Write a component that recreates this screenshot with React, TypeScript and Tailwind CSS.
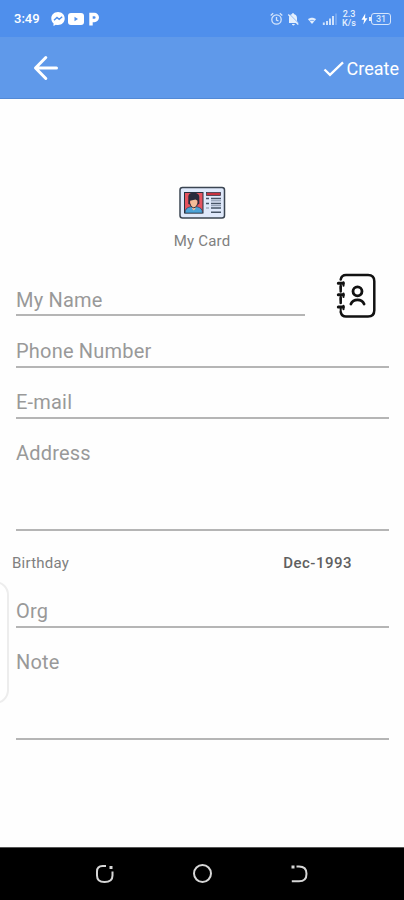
import React from "react";

type FieldProps = {
  label: string;
  className?: string;
};

const Field: React.FC<FieldProps> = ({ label, className = "" }) => (
  <div className={`border-b-2 border-[#b5b5b5] ${className}`}>
    <p className="text-[20px] leading-6 tracking-[0.2px] text-[#999] whitespace-nowrap">
      {label}
    </p>
  </div>
);

const StatusBar: React.FC = () => (
  <div className="h-[37px] shrink-0 bg-[#4f8fec] pl-[14px] pr-[13px] flex items-center justify-between text-white">
    <div className="flex items-center">
      <span className="text-[13px] leading-4 font-medium w-[37px]">3:49</span>
      <svg width="49" height="16" viewBox="0 0 49 16">
        {/* messenger */}
        <path fill="#fff" d="M7 1C3 1 0.3 3.900 0.300 7.400c0 2 .9 3.700 2.200 4.900V15l2.300-1.300c.7.200 1.400.3 2.200.3 4 0 6.700-2.900 6.700-6.500S11 1 7 1Z" />
        <path fill="none" stroke="#4f8fec" strokeWidth="1.400" d="M3 9.300l3-2.900 2.200 1.900 3-2.500" />
        {/* youtube */}
        <rect x="17" y="2" width="16" height="12" rx="3" fill="#fff" />
        <path fill="#4f8fec" d="M23.500 5.800v4.400l3.500-2.200z" />
        {/* p logo */}
        <path fill="none" stroke="#fff" strokeWidth="3.400" d="M40 14.500V3.500h3.300a3 3 0 0 1 0 6H40" />
      </svg>
    </div>
    <div className="flex items-center">
      <svg width="72" height="16" viewBox="0 0 72 16" fill="none" stroke="#d5e5fb" strokeWidth="1.300">
        {/* alarm */}
        <circle cx="6.500" cy="8.500" r="4.700" />
        <path d="M6.500 6v3l2 1M.7 4.500l2.500-2.200M12.300 4.500L9.800 2.300" />
        {/* muted bell */}
        <path fill="#e4effd" stroke="none" d="M19 12V7c0-2.100 1.200-3.600 3.300-4V2h1.400v1c1.900.4 3.300 1.900 3.300 4v3l1.500 2zM22 13h2.800c0 .8-.6 1.400-1.400 1.400S22 13.800 22 13z" />
        <path stroke="#4f8fec" strokeWidth=".7" d="M19.500 3.200l9.500 9.500" />
        <path stroke="#e4effd" d="M18.300 3.500l10 10" />
        {/* wifi */}
        <path fill="#e4effd" stroke="none" d="M38 8.200c2.200-2 5.800-2 8 0L42 13z" />
        <path stroke="#4f8fec" strokeWidth=".7" d="M39.500 10.200c1.400-1.200 3.600-1.200 5 0" />
        {/* signal */}
        <path strokeWidth="1.900" d="M53.800 14v-2.500M57 14v-4M60 14V7.500M63 14V5" />
        <path strokeWidth="1" opacity=".55" d="M66 14V2.500" />
      </svg>
      <p className="w-[16px] -translate-x-px text-center text-[9px] leading-[9px] font-medium text-[#e4effd]">
        2.3
        <br />
        K/s
      </p>
      <div className="ml-[3px] flex items-center">
        <svg width="8" height="12" viewBox="0 0 8 12">
          <path fill="#fff" d="M4.300.5L.5 6.700h2.600L2.300 11.500 6.500 5.200H4z" />
        </svg>
        <span className="h-[4px] w-[2px] bg-[#e4effd]"></span>
        <span className="flex h-[12px] w-[20px] items-center justify-center rounded-[3px] border-[1.500px] border-[#d5e5fb] text-[9px] leading-[10px] font-medium text-[#d5e5fb]">
          31
        </span>
      </div>
    </div>
  </div>
);

const IdCardIcon: React.FC = () => (
  <svg width="48" height="34" viewBox="0 0 48 34">
    <rect x="2" y="1.500" width="44.500" height="30.500" rx="2.500" fill="#dfe9fb" stroke="#3b4552" strokeWidth="1.500" />
    <rect x="6.500" y="6.500" width="18.500" height="20.500" fill="#e5535f" stroke="#27313f" strokeWidth="1" />
    <path fill="#4aa3d8" stroke="#27313f" strokeWidth=".6" d="M7 27c0-4 2-5.500 5.500-6.200H19c3.500.7 5.500 2.200 5.500 6.200z" />
    <path fill="#f4bd98" d="M12.300 13h7v4.800c0 1.700-1 2.700-1.900 3.200v1.700l-1.600 1.700-1.600-1.700V21c-1.100-.5-1.900-1.500-1.900-3.200z" />
    <path fill="#292b3c" d="M10.300 18v-7.500c0-2 1.500-3.300 3.500-3.500 3-.8 7.500.2 7.500 4v7l-1.700.6v-3.800l-2.100-1.300-5.500 1.300v3.800z" />
    <path fill="none" stroke="#27313f" strokeWidth="1" d="M12 17.500c.3 2.200 1.500 3.800 3.800 4.300 2.200-.5 3.500-2.100 3.800-4.300" />
    <rect x="28.500" y="6.500" width="14" height="3" fill="#c83340" stroke="#27313f" strokeWidth=".7" />
    <path stroke="#465466" strokeWidth="1.500" d="M28 12.500h3M33 12.500h10M28 17.500h3M33 17.500h10M33 22h10M33 26.300h10" />
    <path stroke="#8290a5" strokeWidth="1" d="M33 14.800h10M33 19.700h10M28 22h3" />
  </svg>
);

const ContactBookIcon: React.FC = () => (
  <svg width="42" height="46" viewBox="0 0 42 46" fill="none" stroke="#111" strokeWidth="2.500" strokeLinecap="round" strokeLinejoin="round">
    <path d="M4.700 6.500C5.300 3.500 7 2 10 2h22c4 0 6.300 2.300 6.300 6.300v29c0 4-2.300 6.300-6.300 6.300H10c-3 0-4.700-1.500-5.300-4.500M4.700 13.500v5M4.700 25v5" />
    <path strokeWidth="3" d="M2.300 10.300h5M2.300 21.700h5M2.300 34h5" />
    <path strokeWidth="2" d="M7.500 9.200v3.500M7.500 20.600v3.500M7.500 32.800v3.500M4.700 12v4M4.700 23v4M4.700 35v3" />
    <circle cx="21.500" cy="18.300" r="4.500" strokeWidth="2.800" />
    <path strokeWidth="2.800" d="M14.900 31c1.300-2.900 3.600-4.100 6.600-4.100s5.300 1.200 6.600 4.100" />
  </svg>
);

const NavBar: React.FC = () => (
  <div className="h-[53px] shrink-0 border-t border-[#555] bg-black px-[95px] flex items-center justify-between">
    <svg width="20" height="22" viewBox="0 0 20 22" fill="none" stroke="#d6d6d6" strokeWidth="2">
      <path d="M11 3H7.500C4 3 2 5 2 8.500v4C2 16.500 4.500 19 9.500 19s8-2.500 8-6.500V8.500" />
      <path strokeWidth="3" d="M14.500 4.500h3" />
    </svg>
    <svg width="22" height="22" viewBox="0 0 22 22" fill="none" stroke="#d6d6d6" strokeWidth="2">
      <circle cx="11.500" cy="10.500" r="8.500" />
    </svg>
    <svg width="20" height="22" viewBox="0 0 20 22" fill="none" stroke="#d6d6d6" strokeWidth="2">
      <path d="M7.500 3.500H10c5 0 7.500 2.500 7.500 7.200S15 18.300 10 18.300H2.800" />
      <path strokeWidth="3" d="M2.500 4h3" />
    </svg>
  </div>
);

const App: React.FC = () => {
  return (
    <div className="relative flex h-[900px] w-[404px] flex-col overflow-hidden bg-[#fefefe] font-['Roboto',sans-serif]">
      <StatusBar />

      {/* App bar */}
      <header className="h-[62px] shrink-0 border-b border-[#5289d6] bg-[#5f99ea] pl-[33px] pr-[5px] flex items-center justify-between text-white">
        <svg width="26" height="26" viewBox="0 0 26 26" fill="none" stroke="#fff" strokeWidth="3" strokeLinecap="round" strokeLinejoin="round">
          <path d="M12.800 2.500L2.500 13l10.300 10.500M3 13h20.500" />
        </svg>
        <div className="flex items-center pt-[2px]">
          <svg width="24" height="20" viewBox="0 0 24 20" fill="none" stroke="#fff" strokeWidth="2.300">
            <path d="M1.500 10.500l5.500 5.300L20 3.300" />
          </svg>
          <span className="text-[18px] leading-6">Create</span>
        </div>
      </header>

      {/* Card form */}
      <main className="flex-1">
        <div className="flex flex-col items-center pt-[87px]">
          <IdCardIcon />
          <p className="mt-[11px] text-[15px] leading-5 tracking-[0.2px] text-[#808080]">My Card</p>
        </div>

        <div className="pl-4 pr-[15px]">
          <div className="flex h-[65px] items-end justify-between">
            <Field label="My Name" className="h-[51px] w-[289px] pt-[23px]" />
            <div className="mr-[11px] self-start pt-[22px]">
              <ContactBookIcon />
            </div>
          </div>
          <Field label="Phone Number" className="h-[52px] pt-[23px]" />
          <Field label="E-mail" className="h-[51px] pt-[22px]" />
          <Field label="Address" className="h-[112px] pt-[22px]" />
        </div>

        <div className="flex h-[45px] items-center justify-between pl-3 pr-[52px] pt-[19px]">
          <span className="text-[15px] leading-5 tracking-[0.25px] text-[#808080]">Birthday</span>
          <span className="text-[15px] leading-5 font-medium tracking-[0.5px] text-[#606060]">Dec-1993</span>
        </div>

        <div className="pl-4 pr-[15px]">
          <Field label="Org" className="h-[52px] pt-[23px]" />
          <Field label="Note" className="h-[112px] pt-[22px]" />
        </div>
      </main>

      {/* Edge panel handle */}
      <div className="absolute top-[581px] -left-[23px] h-[123px] w-[32px] rounded-[14px] border-2 border-[#ededed] bg-white"></div>

      <NavBar />
    </div>
  );
};

export default App;
